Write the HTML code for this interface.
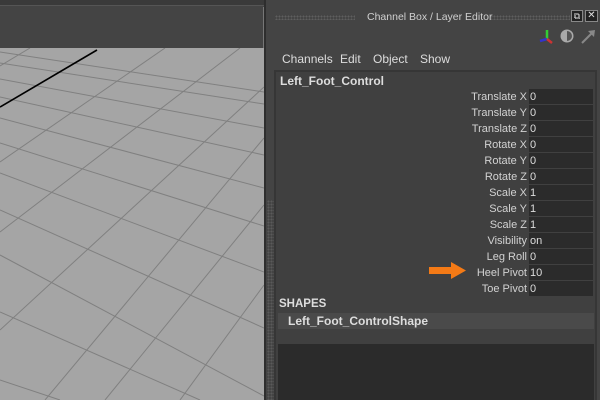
<!DOCTYPE html>
<html><head><style>
*{margin:0;padding:0;box-sizing:border-box}
body{width:600px;height:400px;overflow:hidden;background:#444;font-family:"Liberation Sans",sans-serif;position:relative}
.a{position:absolute}
.lbl{position:absolute;right:73px;font-size:11px;color:#d2d2d2;text-align:right;white-space:nowrap;line-height:15px}
.val{position:absolute;left:529px;width:64px;height:15px;background:#2b2b2b;font-size:11px;color:#ddd;padding-left:1px;line-height:17px}
</style></head><body>
<div class="a" style="left:0;top:0;width:264px;height:6px;background:#3a3a3a;border-bottom:1px solid #555"></div>
<div class="a" style="left:0;top:7px;width:264px;height:41px;background:#444;border-right:1px solid #777"></div>
<svg class="a" style="left:0;top:48px" width="264" height="352" viewBox="0 48 264 352">
<rect x="0" y="48" width="264" height="352" fill="#a5a5a5"/>
<g stroke="#808080" stroke-width="1" fill="none">
<line x1="0" y1="52" x2="264" y2="92"/>
<line x1="0" y1="63" x2="264" y2="104"/>
<line x1="0" y1="79" x2="264" y2="128"/>
<line x1="0" y1="97" x2="264" y2="155"/>
<line x1="0" y1="118" x2="264" y2="188"/>
<line x1="0" y1="143" x2="264" y2="226"/>
<line x1="0" y1="173" x2="264" y2="272"/>
<line x1="0" y1="210" x2="264" y2="328"/>
<line x1="0" y1="255" x2="264" y2="396"/>
<line x1="0" y1="312" x2="200" y2="400"/>
<line x1="0" y1="380" x2="60" y2="400"/>
<line x1="30" y1="48" x2="0" y2="66"/>
<line x1="165" y1="48" x2="0" y2="162"/>
<line x1="240" y1="48" x2="0" y2="232"/>
<line x1="264" y1="87" x2="0" y2="330"/>
<line x1="264" y1="138" x2="45" y2="400"/>
<line x1="264" y1="205" x2="105" y2="400"/>
<line x1="264" y1="285" x2="180" y2="400"/>
</g>
<line x1="97" y1="50" x2="0" y2="107" stroke="#000" stroke-width="1.6"/>
</svg>
<div class="a" style="left:264px;top:0;width:2px;height:400px;background:#2e2e2e"></div>
<div class="a" style="left:267px;top:200px;width:7px;height:200px;background-image:radial-gradient(#5a5a5a 0.8px,transparent 1px);background-size:3px 3px"></div>
<div class="a" style="left:275px;top:15px;width:80px;height:5px;background-image:radial-gradient(#5e5e5e 0.8px,transparent 1px);background-size:3px 3px"></div>
<div class="a" style="left:490px;top:15px;width:80px;height:5px;background-image:radial-gradient(#5e5e5e 0.8px,transparent 1px);background-size:3px 3px"></div>
<div class="a" style="left:367px;top:11px;font-size:10.5px;color:#d0d0d0">Channel Box / Layer Editor</div>
<div class="a" style="left:571px;top:10px;width:12px;height:12px;background:#222;border:1px solid #888;color:#ddd;font-size:9px;line-height:10px;text-align:center">⧉</div>
<div class="a" style="left:585px;top:10px;width:13px;height:12px;background:#222;border:1px solid #888;color:#ddd;font-size:10px;line-height:10px;text-align:center">✕</div>
<svg class="a" style="left:538px;top:28px" width="60" height="18">
<line x1="9" y1="11" x2="9" y2="2" stroke="#3c3" stroke-width="2.5"/>
<line x1="9" y1="11" x2="2" y2="13" stroke="#33c" stroke-width="2.5"/>
<line x1="9" y1="11" x2="14" y2="15" stroke="#c33" stroke-width="2.5"/>
<circle cx="29" cy="8" r="6.5" fill="#aaa"/><path d="M29 3 A5 5 0 0 1 29 13Z" fill="#555"/>
<line x1="44" y1="15" x2="55" y2="4" stroke="#888" stroke-width="2"/><path d="M50 3 L57 2 L56 9Z" fill="#888"/>
</svg>
<div class="a" style="left:282px;top:52px;font-size:12px;color:#ddd">Channels</div>
<div class="a" style="left:340px;top:52px;font-size:12px;color:#ddd">Edit</div>
<div class="a" style="left:373px;top:52px;font-size:12px;color:#ddd">Object</div>
<div class="a" style="left:420px;top:52px;font-size:12px;color:#ddd">Show</div>
<div class="a" style="left:274px;top:70px;width:323px;height:330px;background:#404040;border:2px solid #363636;border-bottom:none"></div>
<div class="a" style="left:280px;top:74px;font-size:12px;font-weight:bold;color:#ddd">Left_Foot_Control</div>
<div class="lbl" style="top:90px">Translate X</div><div class="val" style="top:89px">0</div>
<div class="lbl" style="top:106px">Translate Y</div><div class="val" style="top:105px">0</div>
<div class="lbl" style="top:122px">Translate Z</div><div class="val" style="top:121px">0</div>
<div class="lbl" style="top:138px">Rotate X</div><div class="val" style="top:137px">0</div>
<div class="lbl" style="top:154px">Rotate Y</div><div class="val" style="top:153px">0</div>
<div class="lbl" style="top:170px">Rotate Z</div><div class="val" style="top:169px">0</div>
<div class="lbl" style="top:186px">Scale X</div><div class="val" style="top:185px">1</div>
<div class="lbl" style="top:202px">Scale Y</div><div class="val" style="top:201px">1</div>
<div class="lbl" style="top:218px">Scale Z</div><div class="val" style="top:217px">1</div>
<div class="lbl" style="top:234px">Visibility</div><div class="val" style="top:233px">on</div>
<div class="lbl" style="top:250px">Leg Roll</div><div class="val" style="top:249px">0</div>
<div class="lbl" style="top:266px">Heel Pivot</div><div class="val" style="top:265px">10</div>
<div class="lbl" style="top:282px">Toe Pivot</div><div class="val" style="top:281px">0</div>
<svg class="a" style="left:428px;top:261px" width="40" height="20"><path d="M1 6 H23 V1 L38 9.5 L23 18 V13 H1Z" fill="#f47a16"/></svg>
<div class="a" style="left:279px;top:298px;font-size:11.5px;font-weight:bold;color:#ddd">SHAPES</div>
<div class="a" style="left:278px;top:313px;width:316px;height:16px;background:#4a4a4a"></div>
<div class="a" style="left:288px;top:314px;font-size:12px;font-weight:bold;color:#ddd">Left_Foot_ControlShape</div>
<div class="a" style="left:278px;top:344px;width:316px;height:56px;background:#2b2b2b"></div>
</body></html>
